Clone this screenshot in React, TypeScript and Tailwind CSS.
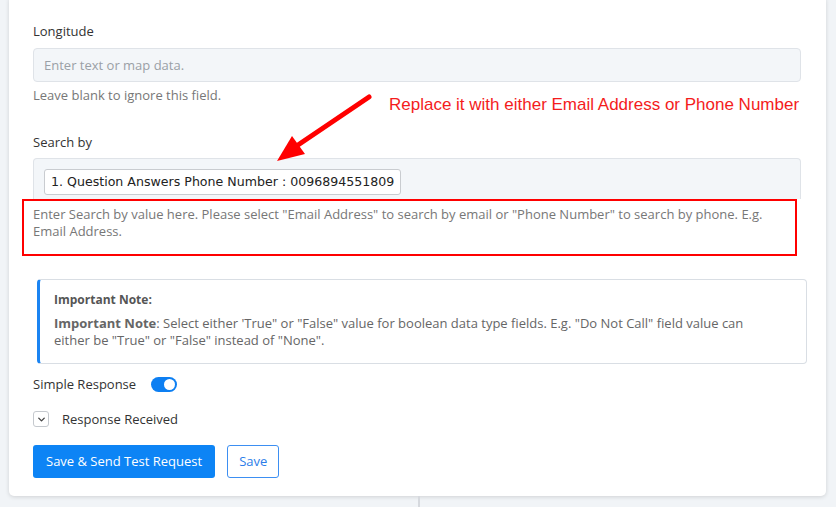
import { ChevronDown } from "lucide-react";

function FieldLabel({ children }: { children: React.ReactNode }) {
  return <label className="block text-[13px] leading-[20px] text-[#333]">{children}</label>;
}

function HelpText({ children }: { children: React.ReactNode }) {
  return <p className="text-[13px] leading-[17px] text-[#777]">{children}</p>;
}

export default function App() {
  return (
    <div
      className="relative min-h-[507px] w-[836px] overflow-hidden bg-[#f1f4f7]"
      style={{ fontFamily: "'Open Sans', Lato, sans-serif" }}
    >
      <div className="ml-[9px] mt-[-4px] w-[817px] rounded-[5px] bg-white pt-[25px] pb-[18px] pl-[24px] pr-[25px] shadow-[0_1px_4px_rgba(0,0,0,0.14)]">
        {/* Longitude */}
        <FieldLabel>Longitude</FieldLabel>
        <input
          readOnly
          placeholder="Enter text or map data."
          className="mt-[7px] h-[34px] w-full rounded-[4px] border border-[#dfe3e8] bg-[#f3f6f9] px-[10px] text-[13px] outline-none placeholder:text-[#9aa0a6]"
        />
        <div className="mt-[5px]">
          <HelpText>Leave blank to ignore this field.</HelpText>
        </div>

        {/* Search by */}
        <div className="mt-[28px]">
          <FieldLabel>Search by</FieldLabel>
        </div>
        <div className="mt-[6px] h-[41px] w-full rounded-t-[4px] border border-b-0 border-[#dfe3e8] bg-[#f3f6f9] px-[10px] pt-[9px]">
          <span
            className="inline-flex h-[26px] items-center rounded-[3px] border border-[#c9ccd0] bg-white px-[6px] text-[12.6px] text-[#222]"
            style={{ fontFamily: "'DejaVu Sans', Verdana, sans-serif" }}
          >
            1. Question Answers Phone Number : 0096894551809
          </span>
        </div>
        <div className="ml-[-11px] w-[775px] border-2 border-[#f00] pt-[5px] pb-[14px] pl-[9px] pr-[8px]">
          <HelpText>
            Enter Search by value here. Please select "Email Address" to search by email or "Phone Number" to search by phone. E.g.
            Email Address.
          </HelpText>
        </div>

        {/* Note */}
        <div className="ml-[4px] mt-[23px] w-[770px] rounded-[4px] border border-l-[3px] border-[#d9dee4] border-l-[#1b84f2] pt-[12px] pb-[14px] pl-[14px] pr-[48px]">
          <p className="text-[12px] font-bold leading-[16px] text-[#555]">Important Note:</p>
          <p className="mt-[7px] text-[13px] leading-[17px] text-[#666]">
            <b>Important Note</b>: Select either 'True" or "False" value for boolean data type fields. E.g. "Do Not Call" field value can either be "True" or "False" instead of "None".
          </p>
        </div>

        {/* Simple response toggle */}
        <div className="mt-[11px] flex items-center gap-[15px]">
          <span className="text-[13px] leading-[18px] text-[#333]">Simple Response</span>
          <span className="relative inline-block h-[15px] w-[26px] rounded-full bg-[#0d7ff2]">
            <span className="absolute right-[2px] top-[2px] h-[11px] w-[11px] rounded-full bg-white" />
          </span>
        </div>

        {/* Response received */}
        <div className="mt-[17px] flex items-center gap-[13px]">
          <span className="flex h-[16px] w-[16px] items-center justify-center rounded-[3px] border border-[#c5c9ce] bg-white">
            <ChevronDown size={11} strokeWidth={3} className="text-[#444]" />
          </span>
          <span className="text-[13px] leading-[18px] text-[#333]">Response Received</span>
        </div>

        {/* Actions */}
        <div className="mt-[17px] flex items-center gap-[12px]">
          <button className="h-[33px] rounded-[3px] bg-[#0d84f5] px-[13px] text-[13px] text-white">
            Save &amp; Send Test Request
          </button>
          <button className="h-[33px] rounded-[3px] border border-[#3d8ff2] bg-white px-[11px] text-[13px] text-[#2b7de9]">
            Save
          </button>
        </div>
      </div>

      {/* column divider below the card */}
      <div className="ml-[418px] h-[20px] w-[2px] bg-[#d6d9de]" />

      {/* annotation */}
      <p
        className="absolute left-[389px] top-[95px] text-[17px] leading-[20px] text-[#f41c1c]"
        style={{ fontFamily: "'Liberation Sans', Arial, sans-serif" }}
      >
        Replace it with either Email Address or Phone Number
      </p>
      <svg className="absolute left-0 top-0" width="836" height="507" viewBox="0 0 836 507">
        <line x1="369" y1="97" x2="295" y2="147" stroke="#f00" strokeWidth="5" strokeLinecap="round" />
        <polygon points="277,161 292,136 305,154" fill="#f00" />
      </svg>
    </div>
  );
}
